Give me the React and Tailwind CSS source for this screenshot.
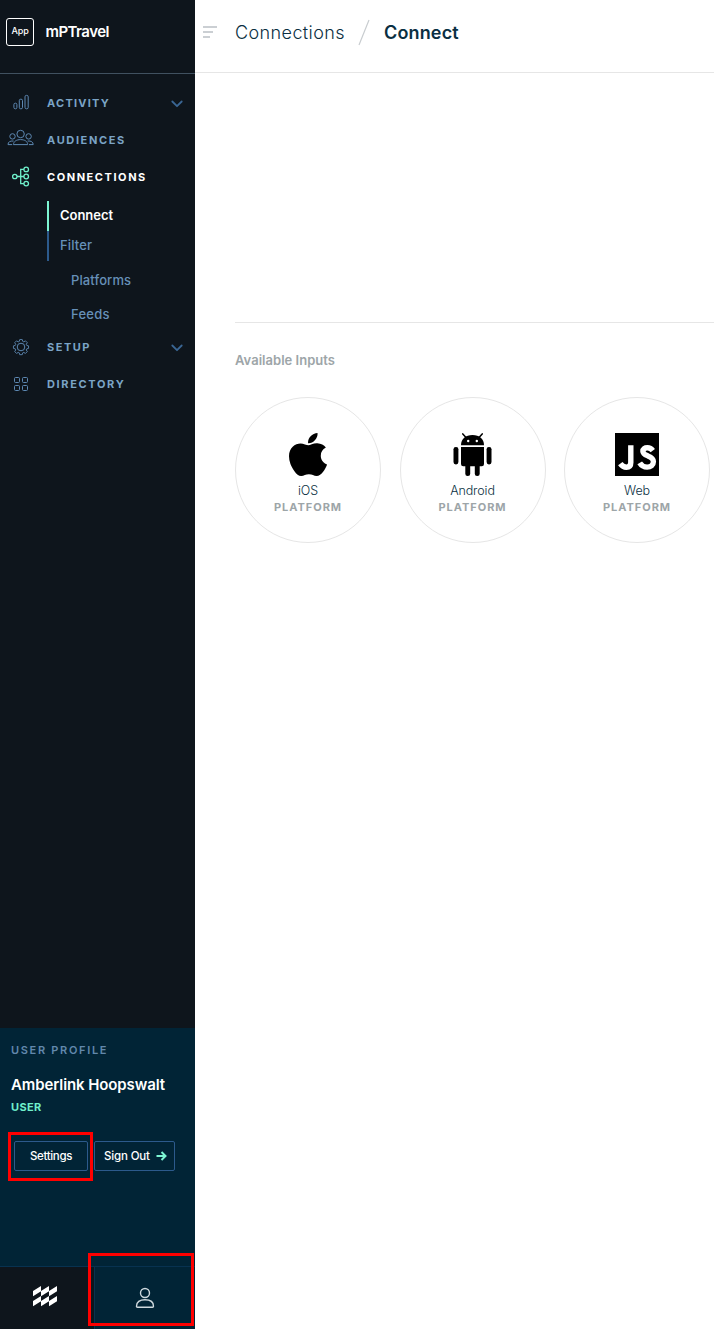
import React from "react";
import { FaApple } from "react-icons/fa";

function NavIcon({ children, className = "text-[#5d88b2]" }) {
  return (
    <svg width="42" height="37" viewBox="0 0 42 37" fill="none" stroke="currentColor" className={"shrink-0 " + className}>
      {children}
    </svg>
  );
}

function NavRow({ icon, label, tracking, active, chevron }) {
  return (
    <div className="flex h-[37px] items-center">
      {icon}
      <span className={"ml-[5px] pb-px text-[11px] font-bold " + tracking + (active ? " text-white" : " text-[#7ba4c6]")}>{label}</span>
      {chevron && (
        <svg width="12" height="8" viewBox="0 0 12 8" fill="none" stroke="#3a6694" strokeWidth="1.800" strokeLinecap="round" strokeLinejoin="round" className="mr-[12.500px] ml-auto">
          <path d="M1.3 1.5 6 6.2 10.7 1.5" />
        </svg>
      )}
    </div>
  );
}

const ActivityIcon = () => (
  <NavIcon>
    <rect x="13.9" y="18.2" width="3" height="5.6" rx="1.4" />
    <rect x="19.3" y="14.2" width="3.2" height="9.6" rx="1.4" />
    <rect x="25" y="10.4" width="3.2" height="13.4" rx="1.4" />
  </NavIcon>
);

const AudiencesIcon = () => (
  <NavIcon>
    <circle cx="20.6" cy="12" r="3.7" />
    <circle cx="12.5" cy="14.4" r="2.7" />
    <circle cx="28.6" cy="14.4" r="2.7" />
    <path d="M13.5 22.6c0-3.2 3-5 7.1-5s7.1 1.8 7.1 5z" strokeLinejoin="round" />
    <path d="M11.8 22.6H8c0-2.6 2-3.9 5.2-3.6M29.4 22.6h3.8c0-2.6-2-3.9-5.2-3.6" strokeLinejoin="round" strokeLinecap="round" />
  </NavIcon>
);

const ConnectionsIcon = () => (
  <NavIcon className="text-[#6ff0cb]">
    <g strokeWidth="1.3">
      <circle cx="14.8" cy="17.5" r="2.2" />
      <circle cx="26.2" cy="10.4" r="2.3" />
      <circle cx="26.2" cy="17.5" r="2.3" />
      <circle cx="26.2" cy="24.6" r="2.3" />
      <path d="M17 17.5h6.9M23.9 10.4h-3.2v14.2h3.2" />
    </g>
  </NavIcon>
);

const GearIcon = () => (
  <NavIcon>
    <path strokeLinejoin="round" transform="translate(1.890 0.930) scale(.91)" d="M19.6 10.6h2.8l.5 2 1.2.5 1.8-1.1 2 2-1.1 1.8.5 1.2 2 .5v2.8l-2 .5-.5 1.2 1.1 1.8-2 2-1.8-1.1-1.2.5-.5 2h-2.8l-.5-2-1.2-.5-1.8 1.1-2-2 1.1-1.8-.5-1.2-2-.5v-2.8l2-.5.5-1.2-1.1-1.8 2-2 1.8 1.1 1.2-.5z" />
    <circle cx="21" cy="18" r="3.800" />
  </NavIcon>
);

const DirectoryIcon = () => (
  <NavIcon>
    <rect x="14.500" y="11.500" width="5" height="5" rx="1" />
    <rect x="22.500" y="11.500" width="5" height="5" rx="1" />
    <rect x="14.500" y="19.500" width="5" height="5" rx="1" />
    <rect x="22.500" y="19.500" width="5" height="5" rx="1" />
  </NavIcon>
);

const AndroidIcon = () => (
  <svg width="39" height="43" viewBox="0 0 39 43">
    <path d="M8 12.3C8 6 12.6 2 19.5 2S31 6 31 12.3z" />
    <path d="M9.8.9l3.2 3.6M29.2.9L26 4.5" stroke="#000" strokeWidth="1.5" strokeLinecap="round" />
    <path d="M8 14h23v17a2.2 2.2 0 0 1-2.2 2.2H10.200A2.200 2.200 0 0 1 8 31z" />
    <rect x="0.500" y="14" width="4.900" height="17.400" rx="2.300" />
    <rect x="33.600" y="14" width="4.900" height="17.400" rx="2.300" />
    <rect x="12.300" y="28" width="4.900" height="15" rx="2.300" />
    <rect x="21.800" y="28" width="4.900" height="15" rx="2.300" />
    <circle cx="15.200" cy="8" r="1.200" fill="#fff" />
    <circle cx="23.800" cy="8" r="1.200" fill="#fff" />
  </svg>
);

const AppleIcon = () => (
  <FaApple viewBox="4 32 376 448" preserveAspectRatio="none" className="h-[43px] w-[38px] text-black" />
);

const JsIcon = () => (
  <svg width="44" height="43" viewBox="0 0 44 43">
    <rect width="44" height="43" />
    <g fill="none" stroke="#fff" strokeWidth="5.400">
      <path d="M15.800 12.200V29.500c0 3.300-1.600 4.700-4.400 4.700-2.700 0-4.500-1.300-6.100-3.600" />
      <path d="M37.800 17.600c-1.400-1.900-3-2.800-5.400-2.800-2.700 0-4.500 1.300-4.500 3.500 0 2.700 2.200 3.500 5 4.600 3.300 1.300 5.500 2.400 5.500 5.600 0 3.700-2.700 5.600-6.300 5.600-3.400 0-5.700-1.400-7.400-4.200" />
    </g>
  </svg>
);

function Platform({ icon, name, tracking }) {
  return (
    <div className="flex h-[146px] w-[146px] shrink-0 flex-col items-center rounded-full border border-[#e6e6e6] pt-[35px]">
      {icon}
      <div className={"mt-[6px] text-[12.5px] leading-[17px] font-light text-[#0a2f42] " + tracking}>{name}</div>
      <div className="text-[11px] leading-[16px] font-bold tracking-[0.97px] text-[#9da5a8]">PLATFORM</div>
    </div>
  );
}

function Sidebar() {
  return (
    <aside className="flex w-[195px] shrink-0 flex-col bg-[#0e151c]">
      <div className="flex h-[74px] items-start border-b border-[#405160] pt-[18px] pl-[6px]">
        <div className="flex h-7 w-7 items-center justify-center rounded-[3px] border border-white pb-[2px] text-[9px] font-medium tracking-[-0.1px] text-white">App</div>
        <div className="ml-[11.500px] text-[15px] leading-[28px] font-semibold tracking-[-0.550px] text-white">mPTravel</div>
      </div>

      <nav className="flex flex-col pt-[11px]">
        <NavRow icon={<ActivityIcon />} label="ACTIVITY" tracking="tracking-[1.25px]" chevron />
        <NavRow icon={<AudiencesIcon />} label="AUDIENCES" tracking="tracking-[1.63px]" />
        <NavRow icon={<ConnectionsIcon />} label="CONNECTIONS" tracking="tracking-[1.56px]" active />
        <div className="mt-[5px] ml-[47px] flex flex-col text-[13px] font-medium text-[#6690b8]">
          <div className="flex h-[30px] items-center border-l-2 border-[#7cf5d3] pl-[11px] font-semibold tracking-[-0.04px] text-white">Connect</div>
          <div className="flex h-[30px] items-center border-l-2 border-[#2c5a8c] pl-[11px] tracking-[0.13px]">Filter</div>
        </div>
        <div className="flex flex-col gap-[14px] pt-[9px] pb-[5px] pl-[71px] text-[13px] leading-5 font-medium text-[#6690b8]">
          <div className="tracking-[0.1px]">Platforms</div>
          <div className="tracking-[0.25px]">Feeds</div>
        </div>
        <NavRow icon={<GearIcon />} label="SETUP" tracking="tracking-[1.5px]" chevron />
        <NavRow icon={<DirectoryIcon />} label="DIRECTORY" tracking="tracking-[1.650px]" />
      </nav>

      <section className="mt-auto flex h-[238px] flex-col bg-[#012436] pt-[14px] pl-[11px]">
        <div className="text-[11px] leading-4 font-semibold tracking-[1.680px] text-[#6288ac]">USER PROFILE</div>
        <div className="mt-[17px] text-[15px] leading-5 font-semibold tracking-[-0.1px] text-white">Amberlink Hoopswalt</div>
        <div className="mt-[4px] text-[11px] leading-4 font-bold tracking-[0.35px] text-[#6ff0cb]">USER</div>
        <div className="mt-[26px] ml-[3px] flex gap-[6px] text-[11.5px] font-medium text-white">
          <div className="relative flex h-[30px] w-[74px] items-center justify-center rounded-[2px] border border-[#2c5a8c] pt-px tracking-[-0.35px]">
            Settings
            <div className="absolute -top-[10px] -left-[7px] h-[49px] w-[85px] border-[3px] border-[#ff0000]" />
          </div>
          <div className="flex h-[30px] w-[81px] items-center rounded-[2px] border border-[#2c5a8c] pt-px pl-[9px] tracking-[-0.15px]">
            Sign Out
            <svg width="11" height="10" viewBox="0 0 11 10" fill="none" stroke="#7cf5d3" strokeWidth="2" className="mb-px ml-[6px]">
              <path d="M0.500 5h8.500M5.500 1l4 4-4 4" />
            </svg>
          </div>
        </div>
      </section>

      <div className="relative flex h-[63px] border-t border-[#083250]">
        <div className="flex w-[94px] items-start pt-[19px] pl-[33px]">
          <svg width="24" height="21" viewBox="0 0 24 21" fill="#fff">
            <path d="M0 5l8-5v5.300l-8 5zM8 5l8-5v5.300l-8 5zM16 5l8-5v5.300l-8 5zM0 15l8-5v5.300l-8 5zM8 15l8-5v5.300l-8 5zM16 15l8-5v5.300l-8 5z" />
          </svg>
        </div>
        <div className="flex flex-1 items-start border-l border-[#083250] bg-[#012436] pt-[20px] pl-[40px]">
          <svg width="20" height="22" viewBox="0 0 20 22" fill="none" stroke="#cfd9de" strokeWidth="1.400">
            <circle cx="10" cy="6" r="4.500" />
            <path d="M1.500 19.200c0-4.200 3.200-6.400 8.500-6.400s8.500 2.200 8.500 6.400q0 1-1 1h-15q-1 0-1-1z" />
          </svg>
        </div>
        <div className="absolute -top-[14px] left-[88px] h-[73px] w-[106px] border-[3px] border-[#ff0000]" />
      </div>
    </aside>
  );
}

export default function App() {
  return (
    <div className="flex h-[1329px] w-[714px] overflow-hidden bg-white font-['Inter','Liberation_Sans',sans-serif]">
      <Sidebar />
      <main className="flex min-w-0 flex-1 flex-col">
        <header className="flex h-[73px] shrink-0 items-start border-b border-[#e6e6e6] pt-[19px] pl-[8px]">
          <div className="mt-[7px] flex w-[14px] flex-col gap-[3px]">
            <div className="h-[2px] w-[14px] bg-[#cbcfd3]" />
            <div className="h-[2px] w-[10px] bg-[#cbcfd3]" />
            <div className="h-[2px] w-[7px] bg-[#cbcfd3]" />
          </div>
          <div className="ml-[18px] w-[112px] text-[18px] leading-[27px] font-light tracking-[0.4px] text-[#0a2f42]">Connections</div>
          <svg width="12" height="27" viewBox="0 0 12 27" fill="none" stroke="#c9cdd0" strokeWidth="1.200" className="ml-[11px]">
            <path d="M1 26 11 1" />
          </svg>
          <div className="ml-[14px] text-[18px] leading-[27px] font-semibold tracking-[0.15px] text-[#0a2f42]">Connect</div>
        </header>
        <div className="mt-[249px] ml-[40px] border-t border-[#e6e6e6] pt-[27px]">
          <h2 className="text-[13px] leading-5 font-semibold tracking-[0.03px] text-[#9da5a8]">Available Inputs</h2>
          <div className="mt-[27px] flex gap-[18.5px]">
            <Platform icon={<AppleIcon />} name="iOS" tracking="tracking-[-0.1px]" />
            <Platform icon={<AndroidIcon />} name="Android" tracking="tracking-[-0.1px]" />
            <Platform icon={<JsIcon />} name="Web" tracking="tracking-[-0.1px]" />
          </div>
        </div>
      </main>
    </div>
  );
}
